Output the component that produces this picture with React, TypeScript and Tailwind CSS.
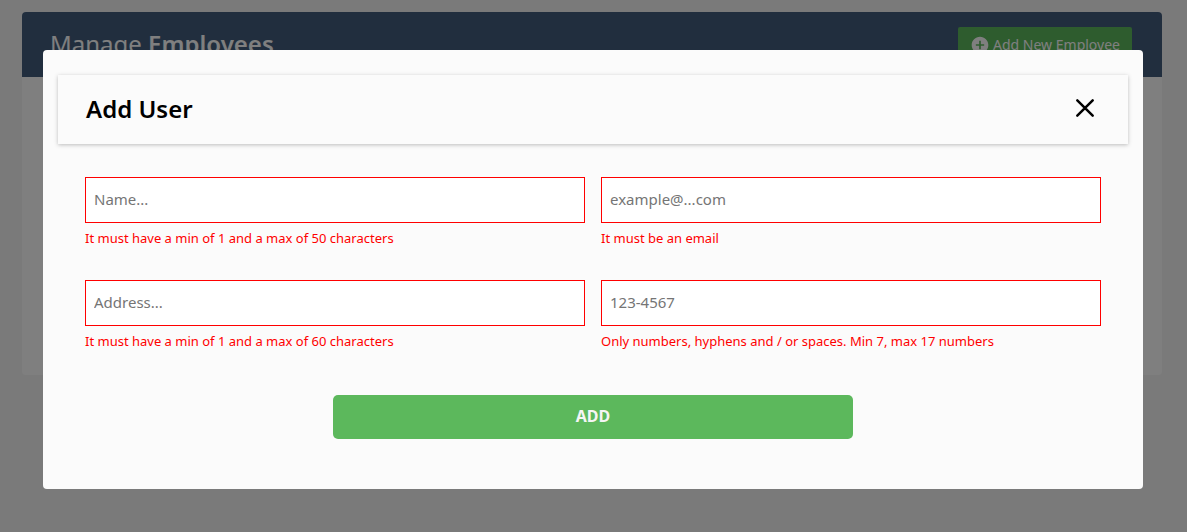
type FieldProps = {
  id: string;
  type: string;
  label: string;
  placeholder: string;
  message: string;
};

const fields: FieldProps[] = [
  { id: 'name', type: 'text', label: 'Name', placeholder: 'Name...', message: 'It must have a min of 1 and a max of 50 characters' },
  { id: 'email', type: 'email', label: 'Email', placeholder: 'example@...com', message: 'It must be an email' },
  { id: 'address', type: 'text', label: 'Address', placeholder: 'Address...', message: 'It must have a min of 1 and a max of 60 characters' },
  { id: 'phone', type: 'tel', label: 'Phone', placeholder: '123-4567', message: 'Only numbers, hyphens and / or spaces. Min 7, max 17 numbers' },
];

function Field({ id, type, label, placeholder, message }: FieldProps) {
  return (
    <div className="flex min-w-0 flex-col gap-1.5">
      <input
        id={id}
        type={type}
        aria-label={label}
        aria-invalid="true"
        aria-describedby={`${id}-message`}
        placeholder={placeholder}
        className="h-[46px] w-full border border-[#ff0000] bg-white px-2 pb-0.5 text-[15px] outline-none placeholder:text-[#757575]"
      />
      <p id={`${id}-message`} className="text-[13px] leading-[18px] text-[#ff0000]">
        {message}
      </p>
    </div>
  );
}

function PlusCircle() {
  return (
    <svg viewBox="0 0 24 24" className="size-5" fill="currentColor" aria-hidden="true">
      <path d="M12 2C6.48 2 2 6.48 2 12s4.48 10 10 10 10-4.48 10-10S17.52 2 12 2zm5 11h-4v4h-2v-4H7v-2h4V7h2v4h4v2z" />
    </svg>
  );
}

function EmployeesPanel() {
  return (
    <main className="min-h-screen pt-3 pr-[25px] pl-[22px]">
      <section className="min-h-[363px] overflow-hidden rounded bg-white">
        <header className="flex items-start justify-between bg-[#435d7d] pt-[15px] pr-[30px] pb-3.5 pl-7 text-white">
          <h1 className="text-2xl leading-[34px]">
            Manage <b className="font-semibold">Employees</b>
          </h1>
          <button type="button" className="flex h-9 items-center gap-[3px] rounded-xs bg-[#5cb85c] px-3 text-sm">
            <PlusCircle />
            Add New Employee
          </button>
        </header>
      </section>
    </main>
  );
}

function AddUserDialog() {
  return (
    <div className="fixed inset-0 flex items-start overflow-auto bg-black/50 pt-[50px] pr-11 pl-[43px]">
      <div role="dialog" aria-modal="true" aria-labelledby="dialog-title" className="w-full rounded bg-[#fbfbfb] pt-[25px] pb-[50px]">
        <header className="mx-[15px] flex items-center justify-between pt-4 pr-8 pb-[18px] pl-7 shadow-[0_1px_4px_rgba(0,0,0,0.25)]">
          <h2 id="dialog-title" className="text-2xl leading-[35px] font-semibold text-black">
            Add User
          </h2>
          <button type="button" aria-label="Close" className="text-black">
            <svg viewBox="0 0 22 22" className="size-[22px]" fill="none" stroke="currentColor" strokeWidth="2.5" strokeLinecap="round" aria-hidden="true">
              <path d="M3.3 2.300l15.400 15.400M18.700 2.300L3.300 17.700" />
            </svg>
          </button>
        </header>
        <form className="px-[42px] pt-[33px]">
          <div className="grid grid-cols-2 gap-x-4 gap-y-[33px]">
            {fields.map((field) => (
              <Field key={field.id} {...field} />
            ))}
          </div>
          <button type="button" className="mx-auto mt-[45px] block h-11 w-full max-w-[520px] rounded-[5px] bg-[#5cb85c] pb-0.5 text-base font-bold text-[#f5f5f5]">
            ADD
          </button>
        </form>
      </div>
    </div>
  );
}

export default function App() {
  return (
    <div className="min-h-screen bg-[#f5f5f5] font-['Noto_Sans',sans-serif]">
      <EmployeesPanel />
      <AddUserDialog />
    </div>
  );
}
